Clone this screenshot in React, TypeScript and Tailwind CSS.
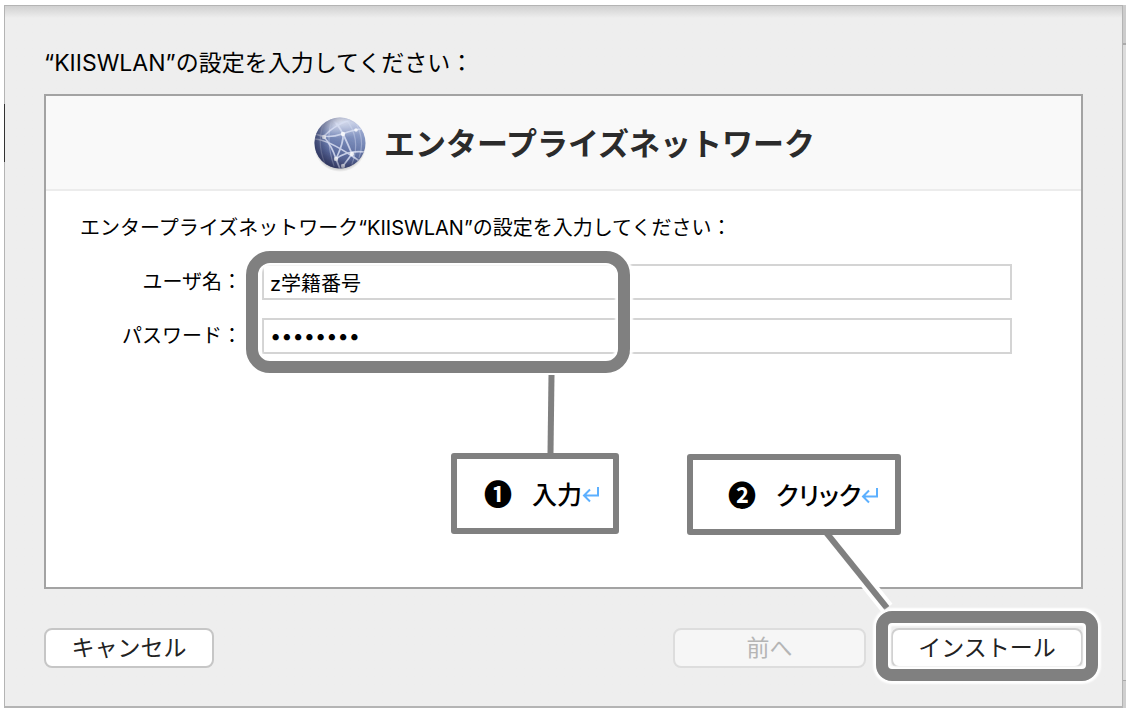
import type { ReactNode } from "react";

function GlobeIcon() {
  return (
    <svg className="h-14 w-14 shrink-0" viewBox="0 0 56 56" aria-hidden="true">
      <defs>
        <linearGradient id="sea" x1="0.6" y1="0" x2="0.35" y2="1">
          <stop offset="0" stopColor="#b4bfe0" />
          <stop offset="0.35" stopColor="#7f90bd" />
          <stop offset="0.7" stopColor="#5b6b9d" />
          <stop offset="1" stopColor="#444a74" />
        </linearGradient>
        <radialGradient id="shade" cx="0.62" cy="0.45" r="0.62">
          <stop offset="0.6" stopColor="#20254a" stopOpacity="0" />
          <stop offset="1" stopColor="#20254a" stopOpacity="0.6" />
        </radialGradient>
        <radialGradient id="gloss" cx="0.5" cy="0.1" r="0.7">
          <stop offset="0" stopColor="#ffffff" stopOpacity="0.65" />
          <stop offset="1" stopColor="#ffffff" stopOpacity="0" />
        </radialGradient>
        <radialGradient id="ground">
          <stop offset="0.75" stopColor="#000000" stopOpacity="0.35" />
          <stop offset="1" stopColor="#000000" stopOpacity="0" />
        </radialGradient>
        <clipPath id="disc">
          <circle cx="28" cy="27" r="25.5" />
        </clipPath>
      </defs>
      <ellipse cx="28" cy="30" rx="26" ry="26" fill="url(#ground)" />
      <circle cx="28" cy="27" r="25.5" fill="url(#sea)" />
      <g clipPath="url(#disc)">
        <ellipse cx="26" cy="14" rx="23" ry="14" fill="url(#gloss)" />
        <g fill="none" stroke="#d8def2" strokeLinecap="round">
          <g strokeWidth="1.2" opacity="0.4">
            <path d="M12 6Q4 26 13 48" />
            <path d="M20 3Q13 24 22 50" />
            <path d="M33 2Q50 22 40 48" />
            <path d="M45 9Q53 26 47 42" />
          </g>
          <g strokeWidth="1.7" opacity="0.85">
            <path d="M3 18Q16 23 30 18T50 13" />
            <path d="M12 20Q24 8 38 4" />
            <path d="M3 23Q16 24 40 40L46 44" />
            <path d="M12 21Q20 30 24 43L28 53" />
            <path d="M31 18Q32 26 24 43" />
            <path d="M31 18Q35 26 40 38L31 50" />
            <path d="M24 43Q35 34 53 36" />
            <path d="M31 18Q26 8 20 3" />
          </g>
        </g>
        <g fill="#ffffff" opacity="0.8">
          <circle cx="12" cy="21" r="2.2" />
          <circle cx="31" cy="18" r="2.2" />
          <circle cx="24" cy="43" r="2.2" />
          <circle cx="40" cy="38" r="2.2" />
          <circle cx="31" cy="50" r="2.2" />
          <circle cx="44" cy="14" r="1.8" />
        </g>
      </g>
      <circle cx="28" cy="27" r="25.5" fill="url(#shade)" />
    </svg>
  );
}

function ReturnMark() {
  return (
    <svg className="h-5 w-[18px] shrink-0" viewBox="0 0 18 20" aria-hidden="true">
      <path
        d="M16 2V10.500H2M8 4.500L2 10.500L8 16.500"
        fill="none"
        stroke="#5cb0ff"
        strokeWidth="2"
      />
    </svg>
  );
}

function Callout({ mark, gap, children }: { mark: string; gap: string; children: ReactNode }) {
  return (
    <div className="flex h-[81px] items-center rounded-[3px] border-6 border-[#808080] bg-white pt-[2px] leading-8 whitespace-nowrap text-black">
      <span className={`${gap} text-[28px] font-bold`}>{mark}</span>
      <span className="ml-5 text-[25px] font-medium [font-feature-settings:'palt']">{children}</span>
      <ReturnMark />
    </div>
  );
}

const field =
  "h-9 min-w-0 flex-1 border-2 border-[#d4d4d4] bg-white px-1.5 text-black outline-none";
const button =
  "h-10 rounded-lg border-2 text-[23px] leading-8";

export default function App() {
  return (
    <div className="flex min-h-screen bg-white pt-[5px] pb-[6px] pl-1 font-['Inter','Noto_Sans_CJK_JP',sans-serif] text-black">
      <main className="relative flex min-w-0 flex-1 flex-col border-x border-t border-b-2 border-[#b4b4b4] bg-[#eeeeee] bg-linear-to-b from-[#d0d0d0] to-[#eeeeee] to-[12px] pt-[41px] pr-[39px] pb-[38px] pl-[39px]">
        <span className="absolute top-[98px] -left-px h-[58px] w-px bg-[#333333]" />
        <h1 className="text-[23px] leading-8">“KIISWLAN”の設定を入力してください：</h1>

        <section className="mt-[15px] flex flex-1 flex-col border-2 border-[#a3a3a3] bg-white">
          <header className="flex h-[95px] items-center justify-center border-b-2 border-[#ececec] bg-[#f9f9f9] pt-[3px]">
            <GlobeIcon />
            <h2 className="ml-4 text-[31px] leading-10 font-bold text-[#2b2b2b]">
              エンタープライズネットワーク
            </h2>
          </header>

          <form className="pt-[23px] pr-[69px] pb-[232px] pl-[34px] text-[20px]">
            <p className="leading-7">
              エンタープライズネットワーク“KIISWLAN”の設定を入力してください：
            </p>
            <div className="relative mt-[22px] flex flex-col gap-[18px]">
              <div className="flex items-center gap-5">
                <label htmlFor="user" className="w-[162px] text-right">
                  ユーザ名：
                </label>
                <input id="user" type="text" defaultValue="z学籍番号" className={field} />
              </div>
              <div className="flex items-center gap-5">
                <label htmlFor="password" className="w-[162px] text-right">
                  パスワード：
                </label>
                <input
                  id="password"
                  type="password"
                  defaultValue="password"
                  className={field}
                />
              </div>

              <div className="pointer-events-none absolute top-[-13px] left-[166px] h-[122px] w-[384px] rounded-3xl border-12 border-[#808080] shadow-[0_0_2px_3px_white,inset_0_0_2px_3px_white]" />
              <div className="absolute top-[111px] left-[371px] w-[168px]">
                <svg className="ml-[96px] h-[78px] w-2" viewBox="0 0 8 78" aria-hidden="true">
                  <path d="M4.500 0L3.500 78" stroke="#808080" strokeWidth="6" />
                </svg>
                <Callout mark="❶" gap="ml-[27px]">
                  入力
                </Callout>
              </div>
            </div>
          </form>
        </section>

        <footer className="mt-[39px] flex items-center">
          <button
            type="button"
            className={`${button} w-[170px] border-[#c6c6c6] bg-white text-[#222222]`}
          >
            キャンセル
          </button>
          <button
            type="button"
            disabled
            className={`${button} ml-auto w-[193px] border-[#dddddd] bg-[#f6f6f6] text-[#b5b5b5]`}
          >
            前へ
          </button>
          <div className="relative ml-[25px]">
            <button
              type="button"
              className={`${button} w-[192px] border-[#cfcfcf] bg-white text-[#222222]`}
            >
              インストール
            </button>
            <svg
              className="pointer-events-none absolute -top-24 -left-[74px] h-20 w-20"
              viewBox="0 0 80 80"
              aria-hidden="true"
            >
              <path d="M46 46L70 76" stroke="#ffffff" strokeWidth="14" />
              <path d="M8 -1L70 76" stroke="#808080" strokeWidth="6" />
            </svg>
            <div className="pointer-events-none absolute -inset-x-[15px] -top-[17px] -bottom-[13px] rounded-2xl border-12 border-[#808080] shadow-[0_0_2px_3px_white,inset_0_0_2px_3px_white]" />
            <div className="absolute -top-[174px] right-[182px] w-[214px]">
              <Callout mark="❷" gap="ml-[35px]">
                クリック
              </Callout>
            </div>
          </div>
        </footer>
      </main>

      <aside className="flex w-[3px] flex-col bg-[#dcdcdc]">
        <span className="h-10 border-b-2 border-[#aaaaaa] bg-[#cccccc]" />
        <span className="mt-auto h-7 border-t border-[#aaaaaa] bg-[#cfcfcf]" />
      </aside>
    </div>
  );
}
